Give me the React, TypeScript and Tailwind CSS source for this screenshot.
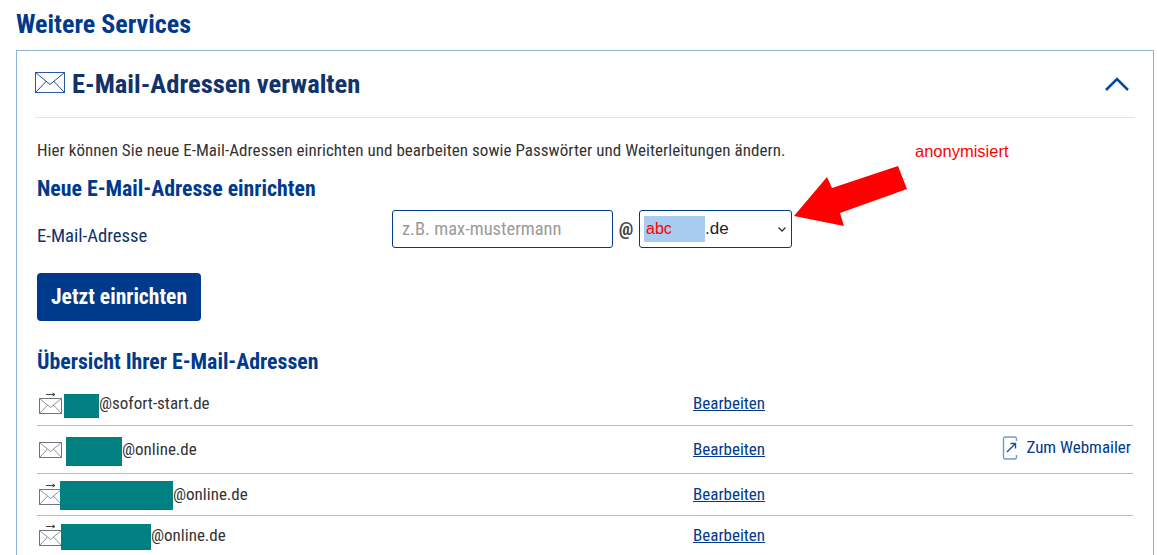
const font = "font-['Roboto_Condensed','Open_Sans',sans-serif]";

function RowEnvelope({ arrow }: { arrow: boolean }) {
  return (
    <svg className={`shrink-0 ${arrow ? "" : "mb-[4px]"}`} width="27" height="24" viewBox="-2 0 27 24" fill="none" stroke="#6b7680" strokeWidth="1">
      {arrow && <path d="M7 2.500h9M13.500 1l2.500 1.500L13.500 4" stroke="#444" />}
      <rect x="0.500" y="6.500" width="22" height="15" fill="#fff" />
      <path d="M0.500 6.500l11 9 11-9M0.500 21.500l8-8.500M22.500 21.500l-8-8.500" stroke="#8a949e" />
    </svg>
  );
}

function Row({ mask, domain, arrow, webmailer, rowClass }: { mask: string; domain: string; arrow: boolean; webmailer?: boolean; rowClass: string }) {
  return (
    <div className={`grid grid-cols-[656px_1fr_auto] items-center border-b border-[#b9bcbf] ${rowClass}`}>
      <div className="flex items-center text-[#333]">
        <RowEnvelope arrow={arrow} />
        <span className={`bg-[#008080] ${mask}`} />
        <span>{domain}</span>
      </div>
      <a className="text-[#003a8c] underline">Bearbeiten</a>
      {webmailer && (
        <a className="-mt-[3px] flex items-center gap-[8px] pr-[2px] text-[#003a8c]">
          <svg width="16" height="24" viewBox="0 0 16 24" fill="none" stroke="#6f9bd0" strokeWidth="1.400">
            <path d="M14.500 5V3a2 2 0 0 0-2-2h-9a2 2 0 0 0-2 2v18a2 2 0 0 0 2 2h9a2 2 0 0 0 2-2v-2" />
            <path d="M5 16l8-8M8.500 7.500H13.500V12.500" stroke="#1c4f96" />
          </svg>
          Zum Webmailer
        </a>
      )}
    </div>
  );
}

export default function App() {
  return (
    <div className={`relative h-[555px] w-[1157px] overflow-hidden bg-white text-[17px] ${font}`}>
      <div className="px-4 pt-[9px]">
        <h2 className="text-[26px] leading-[31px] font-bold text-[#003a8c]">Weitere Services</h2>
        <div className="mt-[10px] h-[600px] w-[1138px] border border-[#8fb4d9] px-[18px]">
          <div className="flex h-[67px] items-center border-b border-[#e4e4e4]">
            <svg className="mr-[7px] mb-[4px]" width="30" height="21" viewBox="0 0 30 21" fill="none" stroke="#1f4f8f" strokeWidth="1">
              <rect x="0.500" y="0.500" width="29" height="20" stroke="#2a5a9a" />
              <path d="M0.500 0.500l14.500 12 14.500-12M0.500 20.500l11-11.500M29.500 20.500l-11-11.500" />
            </svg>
            <h3 className="text-[26.600px] font-bold text-[#12326b]">E-Mail-Adressen verwalten</h3>
            <svg className="ml-auto mr-[5px]" width="26" height="16" viewBox="0 0 26 16" fill="none" stroke="#004a99" strokeWidth="2.500">
              <path d="M2 14L13 3l11 11" />
            </svg>
          </div>
          <div className="pl-[2px]">
            <p className="mt-[21px] leading-[22px] tracking-[0.05px] text-[#333]">Hier können Sie neue E-Mail-Adressen einrichten und bearbeiten sowie Passwörter und Weiterleitungen ändern.</p>
            <h4 className="mt-[16px] text-[21.800px] leading-[24px] font-bold text-[#003a8c]">Neue E-Mail-Adresse einrichten</h4>
            <div className="mt-[9px] flex h-[38px] items-center">
              <span className="w-[355px] pt-[14px] text-[18.700px] text-[#12326b]">E-Mail-Adresse</span>
              <input readOnly placeholder="z.B. max-mustermann" className="h-[38px] w-[221px] rounded-[3px] border border-[#003a8c] px-[9px] text-[18.500px] placeholder:text-[#9a9a9a]" />
              <span className="w-[26px] text-center text-[19px] font-bold text-[#444]">@</span>
              <div className="flex h-[38px] w-[153px] items-center rounded-[3px] border border-[#003a8c] pl-[4px] pr-[4px] text-[#222]">
                <span className="flex h-[26px] w-[61px] items-center bg-[#a8ccf0] pl-[2px] font-['Liberation_Sans',sans-serif] text-[16px] text-[#f00]">abc</span>
                <span className="font-['Liberation_Sans',sans-serif] text-[17px]">.de</span>
                <svg className="ml-auto" width="10" height="7" viewBox="0 0 10 7" fill="none" stroke="#333" strokeWidth="1.300"><path d="M1.500 1.500L5 5l3.500-3.500" /></svg>
              </div>
            </div>
            <button className="mt-[25px] h-[48px] w-[164px] rounded-[4px] bg-[#003a8c] text-[21.600px] font-bold text-white">Jetzt einrichten</button>
            <h4 className="mt-[28px] text-[21.800px] leading-[26px] font-bold text-[#003a8c]">Übersicht Ihrer E-Mail-Adressen</h4>
            <div className="mt-[7px] w-[1096px]">
              <Row rowClass="h-[44px]" mask="mt-[4px] h-[24px] w-[35px]" arrow domain="@sofort-start.de" />
              <Row rowClass="h-[48px]" mask="mt-[4px] h-[29px] w-[56px] ml-[2px]" arrow={false} domain="@online.de" webmailer />
              <Row rowClass="h-[42px]" mask="mt-[1px] h-[29px] w-[113px] -ml-[4px]" arrow domain="@online.de" />
              <Row rowClass="h-[40px] border-b-0" mask="mt-[2px] h-[26px] w-[90px] -ml-[3px]" arrow domain="@online.de" />
            </div>
          </div>
        </div>
      </div>
      <span className="absolute left-[915px] top-[139px] font-['Liberation_Sans',sans-serif] text-[16.500px] font-light text-[#f00]">anonymisiert</span>
      <svg className="absolute left-[790px] top-[160px]" width="125" height="75" viewBox="0 0 125 75">
        <polygon points="4,56 37,17 42,28 108,6 117,29 50,53 54,66" fill="#f00" />
      </svg>
    </div>
  );
}
